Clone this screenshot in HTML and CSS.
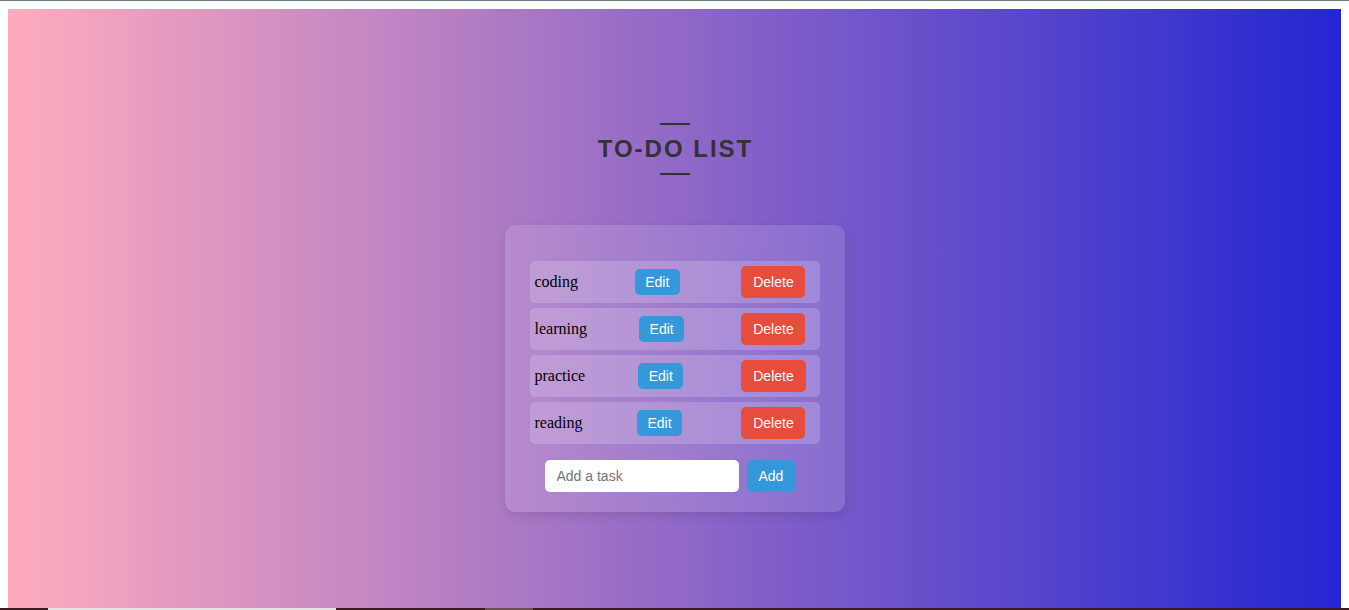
FILE: index.html
```html
<!DOCTYPE html>
<html lang="en">
<head>
<meta charset="utf-8">
<title>To-Do List</title>
<link rel="stylesheet" href="styles.css">
</head>
<body>
<div class="topline"></div>
<div class="frame">
  <main class="page">
    <header class="heading">
      <span class="rule"></span>
      <h1 class="title">TO-DO LIST</h1>
      <span class="rule"></span>
    </header>
    <section class="card">
      <ul class="tasks">
        <li class="task"><span class="task-text">coding</span><button class="btn btn-edit">Edit</button><button class="btn btn-delete">Delete</button></li>
        <li class="task"><span class="task-text">learning</span><button class="btn btn-edit">Edit</button><button class="btn btn-delete">Delete</button></li>
        <li class="task"><span class="task-text">practice</span><button class="btn btn-edit">Edit</button><button class="btn btn-delete">Delete</button></li>
        <li class="task"><span class="task-text">reading</span><button class="btn btn-edit">Edit</button><button class="btn btn-delete">Delete</button></li>
      </ul>
      <form class="add-form">
        <input class="add-input" type="text" placeholder="Add a task">
        <button class="btn btn-add" type="button">Add</button>
      </form>
    </section>
  </main>
</div>
<div class="bottombar">
  <span class="bb-gap1"></span>
  <span class="bb-seg1"></span>
  <span class="bb-gap2"></span>
  <span class="bb-seg2"></span>
</div>
</body>
</html>
```

FILE: styles.css
```css
* { box-sizing: border-box; }

html, body {
  margin: 0;
  padding: 0;
  height: 610px;
  overflow: hidden;
  background: #ffffff;
}

.topline {
  height: 1px;
  background: #6f7b82;
}

.frame {
  padding: 8px 8px 0 8px;
}

.page {
  height: 599px;
  background: linear-gradient(to right, #ffabbd, #2326d1);
  padding-top: 114px;
  display: flex;
  flex-direction: column;
  align-items: center;
}

.heading {
  display: flex;
  flex-direction: column;
  align-items: center;
  gap: 10px;
}

.rule {
  display: block;
  width: 30px;
  height: 2px;
  background: #333333;
}

.title {
  margin: 0;
  font-family: "Liberation Sans", Arial, sans-serif;
  font-size: 24px;
  line-height: 28px;
  font-weight: bold;
  letter-spacing: 2px;
  margin-right: -2px;
  color: #333333;
}

.card {
  margin-top: 50px;
  width: 340px;
  padding: 36px 25px 20px 25px;
  background: rgba(255, 255, 255, 0.13);
  border-radius: 10px;
  box-shadow: 0 4px 10px rgba(0, 0, 0, 0.1);
}

.tasks {
  list-style: none;
  margin: 0;
  padding: 0;
  display: flex;
  flex-direction: column;
  gap: 5px;
}

.task {
  height: 42px;
  display: flex;
  align-items: center;
  justify-content: space-between;
  padding: 5px 14px 5px 5px;
  background: rgba(255, 255, 255, 0.18);
  border-radius: 5px;
}

.task-text {
  font-family: "Liberation Serif", "Times New Roman", serif;
  font-size: 16px;
  color: #000000;
}

.btn {
  border: none;
  color: #ffffff;
  font-family: "Liberation Sans", Arial, sans-serif;
  font-size: 14px;
  line-height: 16px;
  border-radius: 5px;
  cursor: pointer;
}

.btn-edit {
  background: #3498db;
  padding: 5px 10.5px;
  margin-right: 5px;
}

.btn-delete {
  background: #e74c3c;
  padding: 8px 11.8px;
}

.add-form {
  margin: 16px 0 0 15px;
  display: flex;
  gap: 8px;
}

.add-input {
  width: 194px;
  height: 32px;
  border: none;
  border-radius: 5px;
  padding: 0 12px;
  font-family: "Liberation Sans", Arial, sans-serif;
  font-size: 14px;
  background: #ffffff;
  color: #333333;
}

.add-input::placeholder {
  color: #757575;
}

.btn-add {
  background: #3498db;
  height: 32px;
  padding: 0 12px;
}

.bottombar {
  height: 2px;
  display: flex;
  background: #3b1b1f;
}

.bb-gap1 { width: 48px; }
.bb-seg1 { width: 288px; background: #e4e4e4; }
.bb-gap2 { width: 149px; }
.bb-seg2 { width: 48px; background: #6b5052; }
```
